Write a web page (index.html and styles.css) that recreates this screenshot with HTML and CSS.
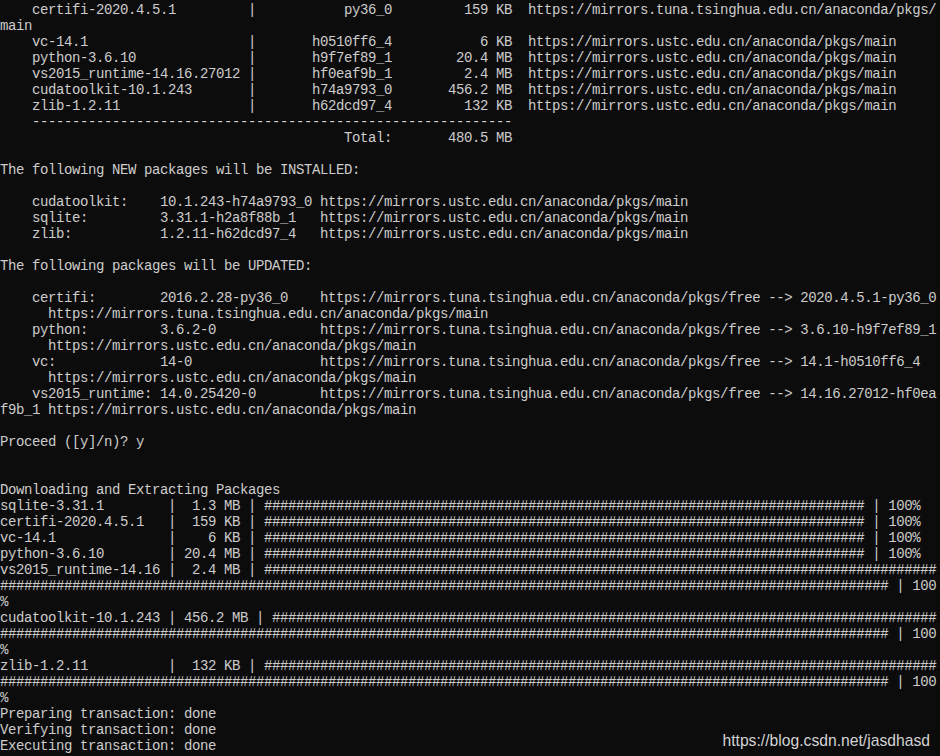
FILE: index.html
```html
<!DOCTYPE html>
<html>
<head>
<meta charset="utf-8">
<title>conda install</title>
<link rel="stylesheet" href="styles.css">
</head>
<body>
<main class="terminal">
<pre class="console">    certifi-2020.4.5.1         |           py36_0         159 KB  https://mirrors.tuna.tsinghua.edu.cn/anaconda/pkgs/
main
    vc-14.1                    |       h0510ff6_4           6 KB  https://mirrors.ustc.edu.cn/anaconda/pkgs/main
    python-3.6.10              |       h9f7ef89_1        20.4 MB  https://mirrors.ustc.edu.cn/anaconda/pkgs/main
    vs2015_runtime-14.16.27012 |       hf0eaf9b_1         2.4 MB  https://mirrors.ustc.edu.cn/anaconda/pkgs/main
    cudatoolkit-10.1.243       |       h74a9793_0       456.2 MB  https://mirrors.ustc.edu.cn/anaconda/pkgs/main
    zlib-1.2.11                |       h62dcd97_4         132 KB  https://mirrors.ustc.edu.cn/anaconda/pkgs/main
    ------------------------------------------------------------
                                           Total:       480.5 MB

The following NEW packages will be INSTALLED:

    cudatoolkit:    10.1.243-h74a9793_0 https://mirrors.ustc.edu.cn/anaconda/pkgs/main
    sqlite:         3.31.1-h2a8f88b_1   https://mirrors.ustc.edu.cn/anaconda/pkgs/main
    zlib:           1.2.11-h62dcd97_4   https://mirrors.ustc.edu.cn/anaconda/pkgs/main

The following packages will be UPDATED:

    certifi:        2016.2.28-py36_0    https://mirrors.tuna.tsinghua.edu.cn/anaconda/pkgs/free --> 2020.4.5.1-py36_0
      https://mirrors.tuna.tsinghua.edu.cn/anaconda/pkgs/main
    python:         3.6.2-0             https://mirrors.tuna.tsinghua.edu.cn/anaconda/pkgs/free --> 3.6.10-h9f7ef89_1
      https://mirrors.ustc.edu.cn/anaconda/pkgs/main
    vc:             14-0                https://mirrors.tuna.tsinghua.edu.cn/anaconda/pkgs/free --> 14.1-h0510ff6_4
      https://mirrors.ustc.edu.cn/anaconda/pkgs/main
    vs2015_runtime: 14.0.25420-0        https://mirrors.tuna.tsinghua.edu.cn/anaconda/pkgs/free --> 14.16.27012-hf0ea
f9b_1 https://mirrors.ustc.edu.cn/anaconda/pkgs/main

Proceed ([y]/n)? y


Downloading and Extracting Packages
sqlite-3.31.1        |  1.3 MB | ########################################################################### | 100%
certifi-2020.4.5.1   |  159 KB | ########################################################################### | 100%
vc-14.1              |    6 KB | ########################################################################### | 100%
python-3.6.10        | 20.4 MB | ########################################################################### | 100%
vs2015_runtime-14.16 |  2.4 MB | ####################################################################################
############################################################################################################### | 100
%
cudatoolkit-10.1.243 | 456.2 MB | ###################################################################################
############################################################################################################### | 100
%
zlib-1.2.11          |  132 KB | ####################################################################################
############################################################################################################### | 100
%</pre>
<pre class="console tail">Preparing transaction: done
Verifying transaction: done
Executing transaction: done</pre>
<span class="watermark">https://blog.csdn.net/jasdhasd</span>
</main>
</body>
</html>
```
FILE: styles.css
```css
html, body {
  margin: 0;
  padding: 0;
  background: #0c0c0c;
}

.terminal {
  position: relative;
  width: 940px;
  height: 756px;
  overflow: hidden;
  background: #0c0c0c;
  padding-top: 2px;
  box-sizing: border-box;
}

.console {
  margin: 0;
  padding: 0;
  font-family: "Liberation Mono", "DejaVu Sans Mono", monospace;
  font-size: 14px;
  letter-spacing: -0.4px;
  line-height: 16px;
  color: #cccccc;
  white-space: pre;
}

.tail {
  width: max-content;
}

.watermark {
  position: absolute;
  right: 10px;
  bottom: 6px;
  font-family: "Liberation Sans", Arial, sans-serif;
  font-size: 15.7px;
  line-height: 18px;
  color: #d4d4d4;
  text-shadow: 0 0 1px rgba(0, 0, 0, 0.6);
}
```
